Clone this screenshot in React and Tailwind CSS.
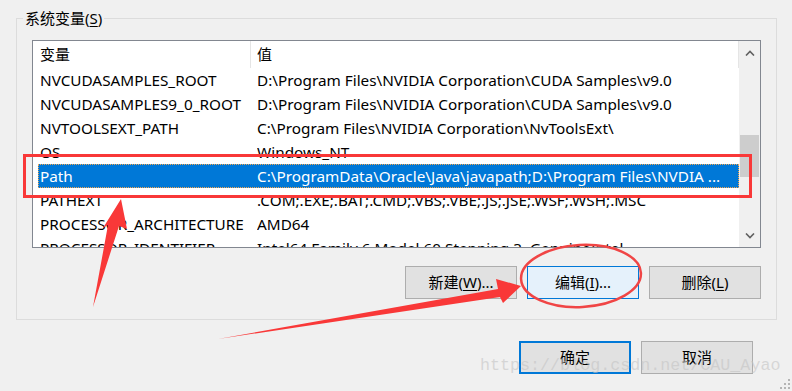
import React from "react";

const rows = [
  ["NVCUDASAMPLES_ROOT", "D:\\Program Files\\NVIDIA Corporation\\CUDA Samples\\v9.0"],
  ["NVCUDASAMPLES9_0_ROOT", "D:\\Program Files\\NVIDIA Corporation\\CUDA Samples\\v9.0"],
  ["NVTOOLSEXT_PATH", "C:\\Program Files\\NVIDIA Corporation\\NvToolsExt\\"],
  ["OS", "Windows_NT"],
  ["Path", "C:\\ProgramData\\Oracle\\Java\\javapath;D:\\Program Files\\NVDIA ..."],
  ["PATHEXT", ".COM;.EXE;.BAT;.CMD;.VBS;.VBE;.JS;.JSE;.WSF;.WSH;.MSC"],
  ["PROCESSOR_ARCHITECTURE", "AMD64"],
  ["PROCESSOR_IDENTIFIER", "Intel64 Family 6 Model 60 Stepping 3, GenuineIntel"],
];

const font = { fontFamily: '"Noto Sans", "Noto Sans CJK SC", sans-serif' };

function Btn({ children, variant }) {
  let cls = "border border-[#adadad] bg-[#e1e1e1]";
  if (variant === "hover") cls = "border border-[#0078d7] bg-[#e5f1fb]";
  if (variant === "default") cls = "border-2 border-[#0078d7] bg-[#e1e1e1]";
  return (
    <div className={`w-[112px] h-[33px] flex items-center justify-center text-[15px] text-black ${cls}`}>
      <span className="leading-none">{children}</span>
    </div>
  );
}

export default function App() {
  return (
    <div className="relative w-[792px] h-[391px] overflow-hidden bg-[#f0f0f0] text-black" style={font}>
      <div className="pt-[18px] pl-[16px]">
        {/* group box */}
        <div className="relative w-[761px] h-[302px] border border-[#dcdcdc] pt-[21px] pl-[15px]">
          <div className="absolute left-[6px] top-[-11px] px-[2px] bg-[#f0f0f0] text-[15px] leading-[20px]">
            系统变量(<span className="underline underline-offset-2">S</span>)
          </div>
          {/* list box */}
          <div className="w-[729px] h-[208px] border border-[#828790] bg-white flex overflow-hidden">
            <div className="flex-1 min-w-0 flex flex-col">
              <div className="h-[27px] flex items-center shrink-0 text-[15px]">
                <div className="w-[218px] h-full pl-[7px] flex items-center border-r border-[#e5e5e5]">变量</div>
                <div className="flex-1 h-full pl-[6px] flex items-center border-r border-[#e5e5e5]">值</div>
              </div>
              {rows.map(([k, v]) => {
                const sel = k === "Path";
                return (
                  <div
                    key={k}
                    className={`ml-[5px] h-[24px] shrink-0 flex items-center text-[15.3px] whitespace-nowrap ${
                      sel ? "bg-[#0078d7] text-white outline-1 outline-dotted outline-[#f2a650] -outline-offset-1" : ""
                    }`}
                  >
                    <div className="w-[219px] pl-[2px] shrink-0">{k}</div>
                    <div className="flex-1 overflow-hidden">{v}</div>
                  </div>
                );
              })}
            </div>
            {/* scrollbar */}
            <div className="w-[21px] shrink-0 bg-[#f0f0f0] flex flex-col">
              <div className="h-[24px] flex items-center justify-center">
                <svg width="10" height="6" viewBox="0 0 10 6">
                  <polyline points="1,5.5 5,1.5 9,5.5" fill="none" stroke="#606060" strokeWidth="1.6" />
                </svg>
              </div>
              <div className="h-[70px]" />
              <div className="h-[42px] mx-[1px] bg-[#cdcdcd]" />
              <div className="flex-1" />
              <div className="h-[22px] flex items-center justify-center">
                <svg width="10" height="6" viewBox="0 0 10 6">
                  <polyline points="1,0.5 5,4.5 9,0.5" fill="none" stroke="#606060" strokeWidth="1.6" />
                </svg>
              </div>
            </div>
          </div>
          {/* buttons */}
          <div className="w-[729px] mt-[18px] flex justify-end gap-[10px]">
            <Btn>
              新建(<span className="underline underline-offset-2">W</span>)...
            </Btn>
            <Btn variant="hover">
              编辑(<span className="underline underline-offset-2">I</span>)...
            </Btn>
            <Btn>
              删除(<span className="underline underline-offset-2">L</span>)
            </Btn>
          </div>
        </div>
      </div>
      {/* bottom buttons */}
      <div className="mt-[21px] pr-[39px] flex justify-end gap-[10px]">
        <Btn variant="default">确定</Btn>
        <Btn>取消</Btn>
      </div>

      {/* watermark */}
      <div
        className="absolute left-[480px] top-[356px] text-[16.7px] leading-[20px] text-[#c4c4c4]/60 whitespace-nowrap"
        style={{ fontFamily: '"Liberation Mono", monospace' }}
      >
        https://blog.csdn.net/CAU_Ayao
      </div>

      {/* resize grip */}
      <svg className="absolute right-0 bottom-0" width="14" height="14" viewBox="0 0 14 14">
        {[[10, 2], [6, 6], [10, 6], [2, 10], [6, 10], [10, 10]].map(([x, y]) => (
          <rect key={`${x}-${y}`} x={x} y={y} width="2" height="2" fill="#b4b4b4" />
        ))}
      </svg>

      {/* annotations */}
      <svg className="absolute inset-0 pointer-events-none" width="792" height="391" viewBox="0 0 792 391">
        <rect x="24.5" y="155.5" width="726" height="41" fill="none" stroke="#f93838" strokeWidth="3" />
        <polygon points="93,307 108,225 103,228 121,199 127,229 119,226" fill="#f93838" />
        <polygon points="218,339 498,289 496,279 521,286 503,303 500,297" fill="#f93838" />
        <ellipse cx="581" cy="276" rx="60" ry="31" fill="none" stroke="#f04545" strokeWidth="2.5" transform="rotate(-3 581 276)" />
      </svg>
    </div>
  );
}
